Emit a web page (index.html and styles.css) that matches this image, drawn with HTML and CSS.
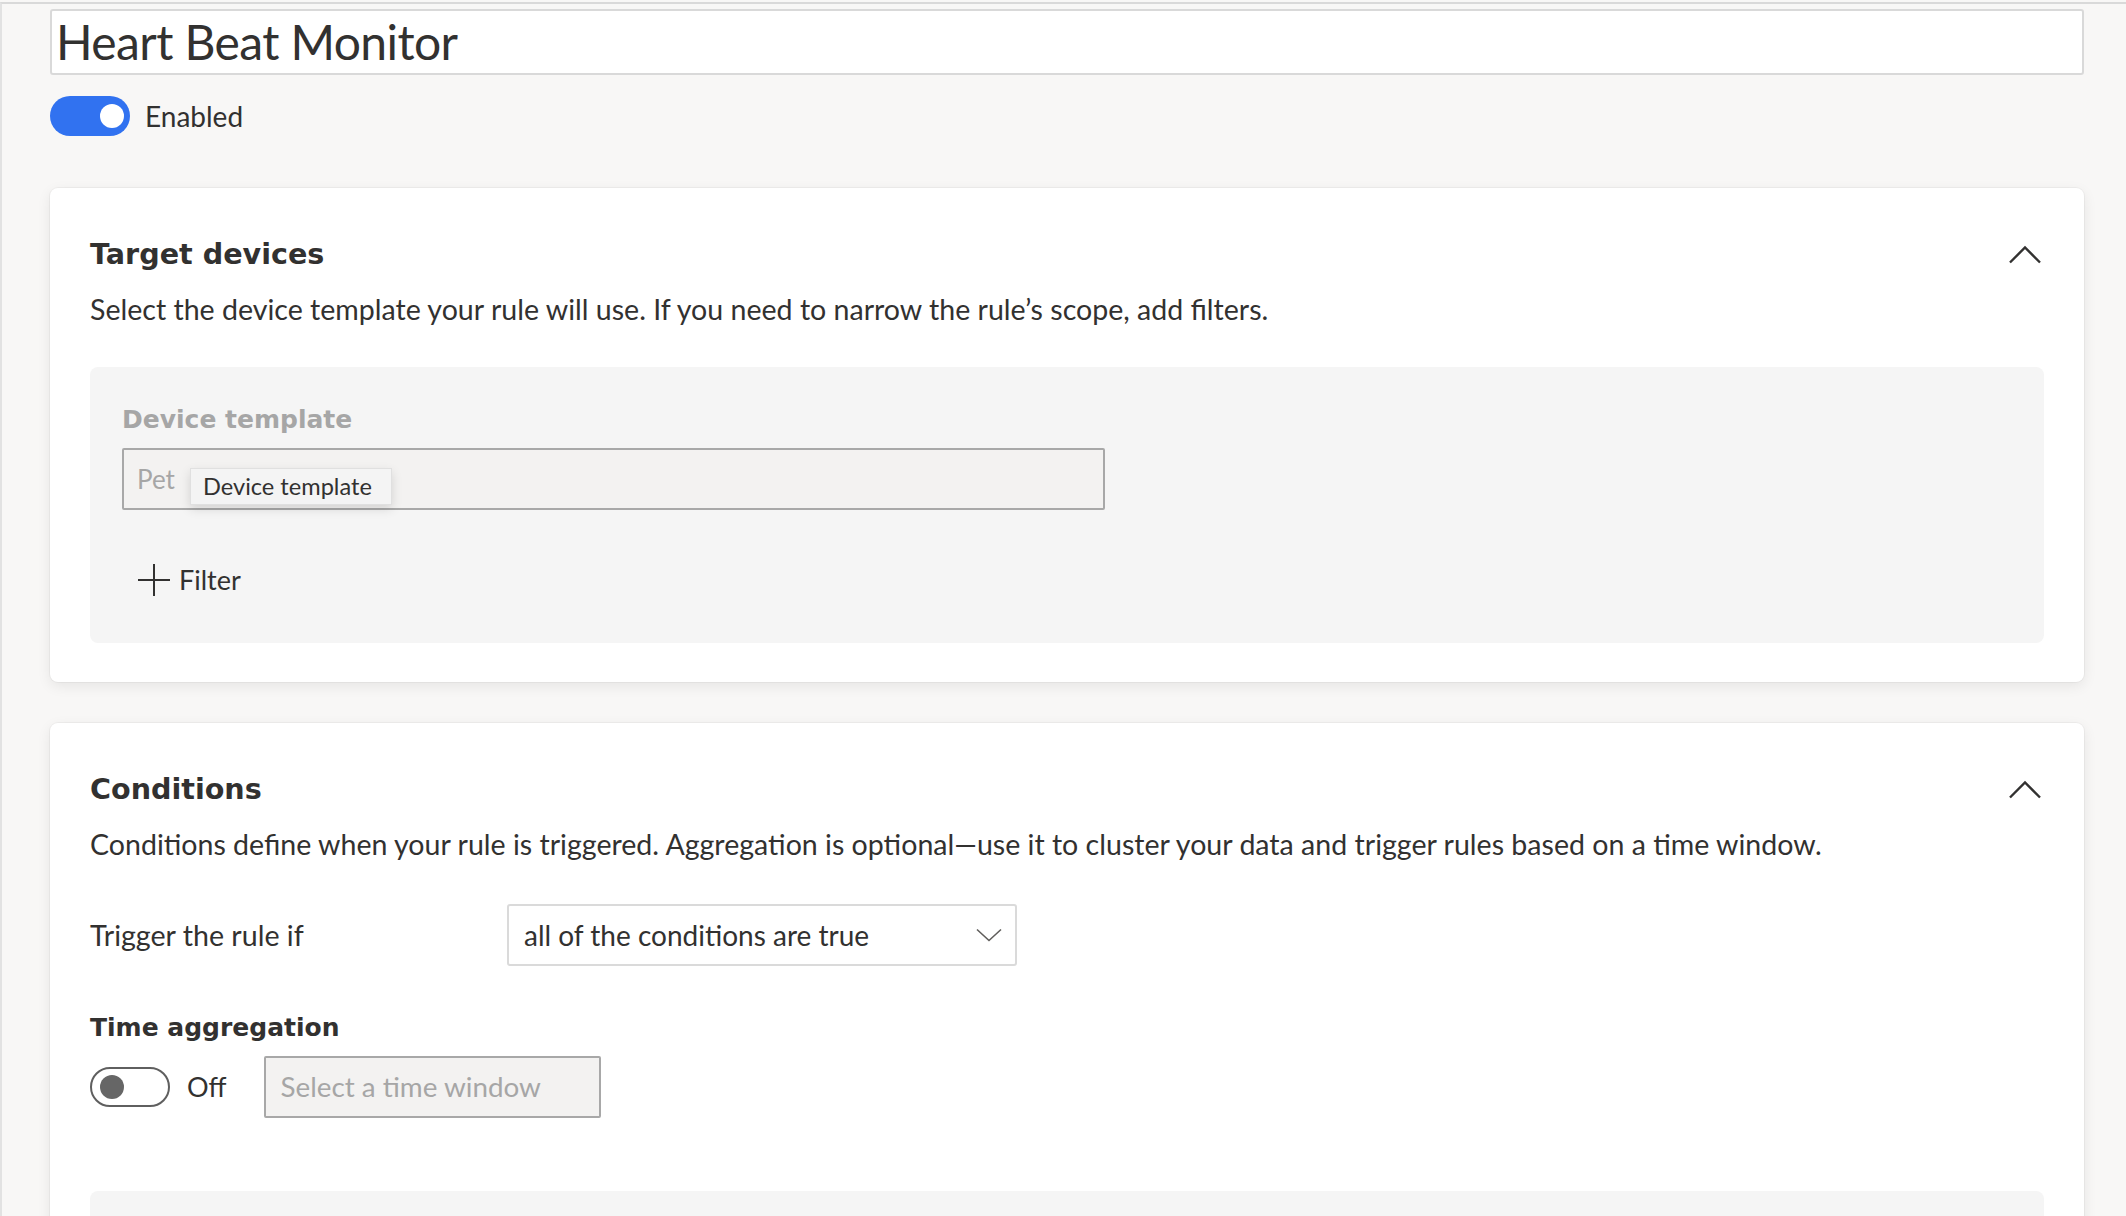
FILE: index.html
```html
<!DOCTYPE html>
<html lang="en">
<head>
<meta charset="utf-8">
<title>Heart Beat Monitor</title>
<link rel="stylesheet" href="styles.css">
</head>
<body>
<div class="frame">
  <div class="title-box"><span class="title">Heart Beat Monitor</span></div>

  <div class="enable-row">
    <span class="toggle on"><span class="knob"></span></span>
    <span class="toggle-label">Enabled</span>
  </div>

  <section class="card">
    <div class="card-head">
      <h2>Target devices</h2>
      <svg class="chev-up" width="36" height="20" viewBox="0 0 36 20"><polyline points="2,18.5 17,3.5 32,18.5" fill="none" stroke="#323130" stroke-width="2.4"/></svg>
    </div>
    <p class="desc">Select the device template your rule will use. If you need to narrow the rule’s scope, add filters.</p>
    <div class="panel">
      <div class="field-label muted">Device template</div>
      <div class="input disabled wide">
        <span class="ph">Pet</span>
        <span class="tooltip">Device template</span>
      </div>
      <div class="add-filter">
        <svg width="32" height="32" viewBox="0 0 32 32"><path d="M16 0 V32 M0 16 H32" stroke="#323130" stroke-width="2" fill="none"/></svg>
        <span>Filter</span>
      </div>
    </div>
  </section>

  <section class="card">
    <div class="card-head">
      <h2>Conditions</h2>
      <svg class="chev-up" width="36" height="20" viewBox="0 0 36 20"><polyline points="2,18.5 17,3.5 32,18.5" fill="none" stroke="#323130" stroke-width="2.4"/></svg>
    </div>
    <p class="desc">Conditions define when your rule is triggered. Aggregation is optional—use it to cluster your data and trigger rules based on a time window.</p>
    <div class="trigger-row">
      <span class="row-label">Trigger the rule if</span>
      <div class="dropdown">
        <span>all of the conditions are true</span>
        <svg width="26" height="14" viewBox="0 0 26 14"><polyline points="1,1.5 13,12.5 25,1.5" fill="none" stroke="#605e5c" stroke-width="1.6"/></svg>
      </div>
    </div>
    <div class="field-label agg-label">Time aggregation</div>
    <div class="agg-row">
      <span class="toggle off"><span class="knob"></span></span>
      <span class="toggle-label off-label">Off</span>
      <div class="input disabled narrow"><span class="ph ph-lg">Select a time window</span></div>
    </div>
    <div class="panel cond-panel"></div>
  </section>
</div>
</body>
</html>
```

FILE: styles.css
```css
html, body {
  margin: 0;
  padding: 0;
  background: #f8f7f6;
  overflow: hidden;
}

body {
  font-family: Lato, "Open Sans", sans-serif;
  color: #323130;
}

.frame {
  box-sizing: border-box;
  height: 1214px;
  margin-top: 2px;
  border-top: 2px solid #d9d9d9;
  border-left: 2px solid #e2e2e2;
  padding: 5px 42px 0 48px;
  overflow: hidden;
}

.title-box {
  box-sizing: border-box;
  height: 66px;
  border: 2px solid #d9d9d9;
  border-radius: 3px;
  background: #fff;
  padding-left: 4px;
}

.title {
  font-size: 48px;
  letter-spacing: -0.6px;
  line-height: 62px;
  color: #323130;
  white-space: nowrap;
}

.enable-row {
  display: flex;
  align-items: center;
  margin-top: 21px;
  height: 40px;
}

.toggle {
  box-sizing: border-box;
  display: flex;
  align-items: center;
  width: 80px;
  height: 40px;
  border-radius: 20px;
  flex: none;
}

.toggle .knob {
  width: 24px;
  height: 24px;
  border-radius: 50%;
}

.toggle.on {
  background: #3172f0;
  justify-content: flex-end;
  padding: 0 6px;
}

.toggle.on .knob {
  background: #fff;
}

.toggle.off {
  background: #fff;
  border: 2px solid #5f5f5f;
  padding: 0 8px;
}

.toggle.off .knob {
  background: #666;
}

.toggle-label {
  font-size: 28px;
  line-height: 40px;
  margin-left: 15px;
}

.card {
  margin-top: 52px;
  background: #fff;
  border-radius: 8px;
  box-shadow: 0 0 0 1px rgba(0, 0, 0, 0.035), 0 4px 14px rgba(0, 0, 0, 0.08);
  padding: 48px 40px 39px 40px;
}

.card + .card {
  margin-top: 41px;
}

.card-head {
  display: flex;
  align-items: center;
  justify-content: space-between;
  height: 36px;
}

.card-head h2 {
  margin: 0;
  font-family: "DejaVu Sans", sans-serif;
  font-weight: bold;
  font-size: 28.6px;
  line-height: 36px;
  color: #323130;
}

.chev-up {
  display: block;
}

.desc {
  margin: 21px 0 0 0;
  font-size: 28.55px;
  line-height: 32px;
  white-space: nowrap;
}

.panel {
  margin-top: 42px;
  background: #f5f5f5;
  border-radius: 8px;
  padding: 37px 32px 43px 32px;
}

.field-label {
  font-family: "DejaVu Sans", sans-serif;
  font-weight: bold;
  font-size: 25px;
  line-height: 32px;
}

.field-label.muted {
  color: #a6a6a6;
}

.input {
  box-sizing: border-box;
  position: relative;
  height: 62px;
  border: 2px solid #a8a8a8;
  border-radius: 2px;
  background: #f3f2f1;
  padding-left: 13px;
  display: flex;
  align-items: center;
}

.input.wide {
  width: 983px;
  margin-top: 12px;
}

.input.narrow {
  width: 337px;
  margin-left: 38px;
  padding-left: 14px;
}

.ph {
  font-size: 26px;
  line-height: 58px;
  color: #a6a6a6;
  white-space: nowrap;
}

.ph-lg {
  font-size: 27.8px;
}

.tooltip {
  position: absolute;
  left: 66px;
  top: 18px;
  box-sizing: border-box;
  width: 202px;
  height: 37px;
  padding-left: 12px;
  background: #f4f4f4;
  border: 1px solid #e0e0e0;
  box-shadow: 0 4px 10px rgba(0, 0, 0, 0.13);
  font-size: 23.6px;
  line-height: 35px;
  color: #323130;
  white-space: nowrap;
}

.add-filter {
  display: flex;
  align-items: center;
  height: 40px;
  margin-top: 50px;
  padding-left: 16px;
  font-size: 27px;
  line-height: 40px;
}

.add-filter svg {
  display: block;
  margin-right: 9px;
}

.trigger-row {
  display: flex;
  align-items: center;
  margin-top: 44px;
  height: 62px;
}

.row-label {
  width: 417px;
  flex: none;
  font-size: 28.6px;
  line-height: 40px;
}

.dropdown {
  box-sizing: border-box;
  width: 510px;
  height: 62px;
  border: 2px solid #dadada;
  border-radius: 3px;
  background: #fff;
  display: flex;
  align-items: center;
  justify-content: space-between;
  padding: 0 13px 0 15px;
  font-size: 28px;
}

.dropdown svg {
  display: block;
}

.agg-label {
  margin-top: 46px;
  color: #323130;
}

.agg-row {
  display: flex;
  align-items: center;
  margin-top: 12px;
  height: 62px;
}

.off-label {
  font-size: 27px;
  margin-left: 17px;
}

.cond-panel {
  margin-top: 73px;
  height: 200px;
  padding: 0;
}
```
